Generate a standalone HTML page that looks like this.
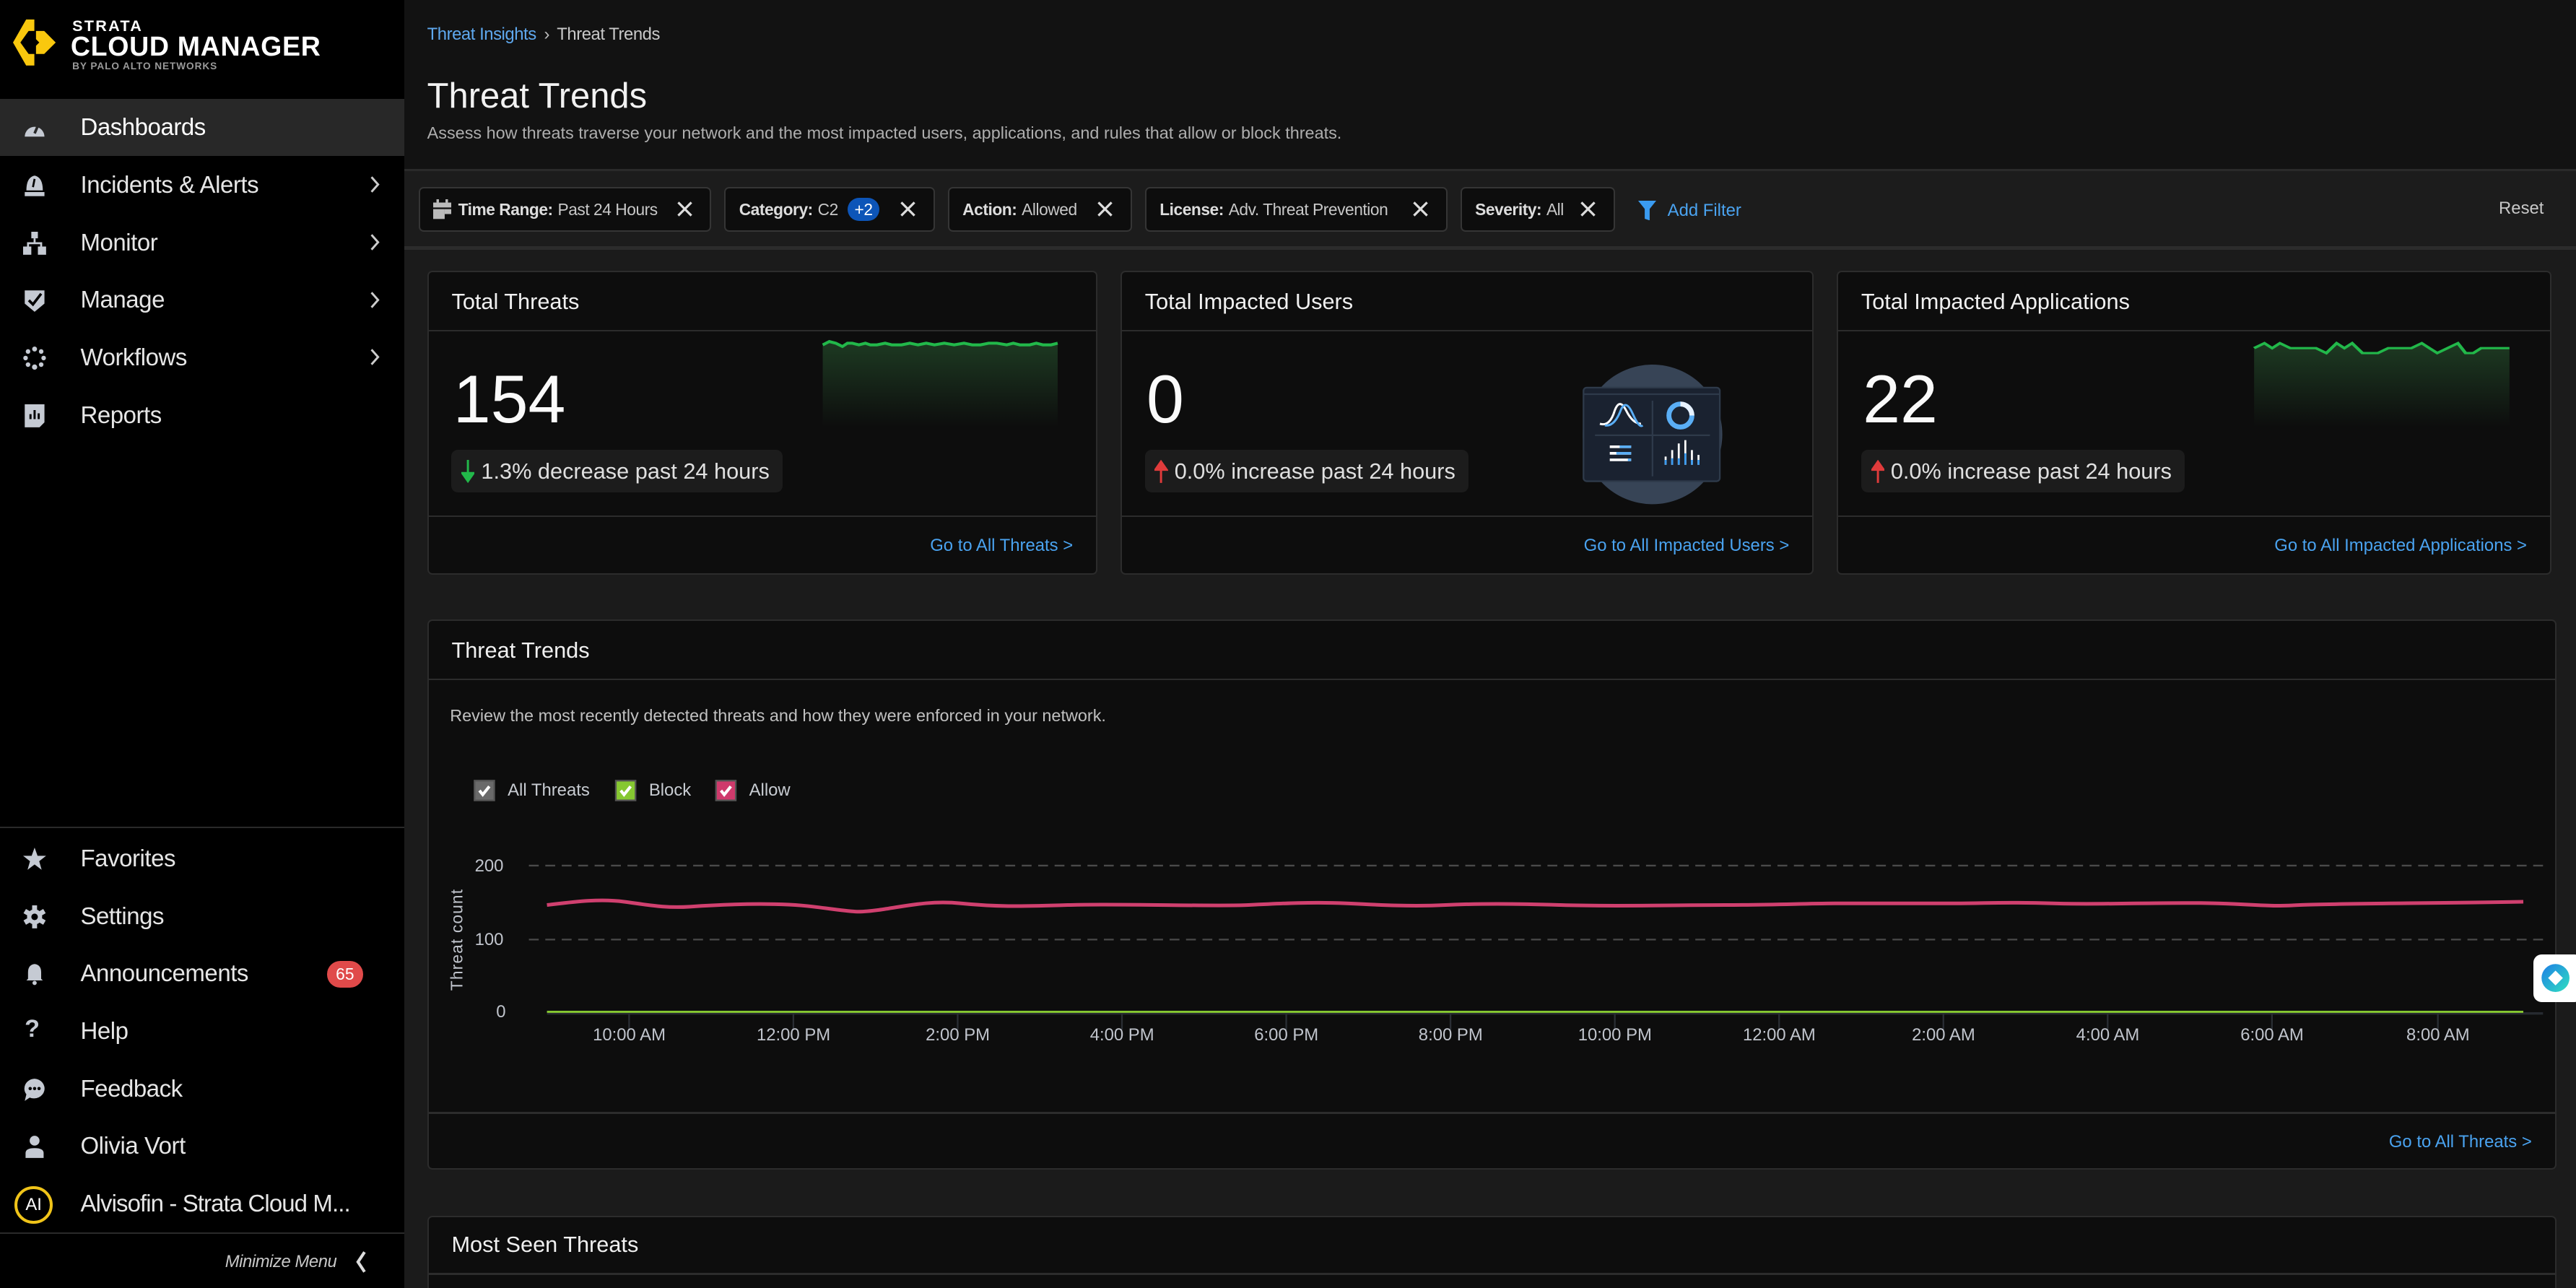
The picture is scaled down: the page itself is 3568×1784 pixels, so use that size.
<!DOCTYPE html>
<html><head><meta charset="utf-8"><style>
*{box-sizing:border-box;margin:0;padding:0}
html,body{width:3568px;height:1784px;overflow:hidden;background:#1b1b1b}
#root{position:relative;width:1568px;height:784px;zoom:2.27551;font-family:"Liberation Sans",sans-serif;color:#e8e8e8;overflow:hidden;background:#1b1b1b}
.a{position:absolute}
.side{left:0;top:0;width:246px;height:784px;background:#000}
.nav{position:absolute;left:0;width:246px;height:35px;display:flex;align-items:center;font-size:14.5px;color:#e6e6e6}
.nav .ic{position:absolute;left:14px;top:11px;width:14px;height:14px}
.nav .t{position:absolute;left:49px;letter-spacing:-0.2px}
.nav .ch{position:absolute;left:224px;top:12px}
.chip{position:absolute;top:114px;height:27px;background:#0d0d0d;border:1px solid #353535;border-radius:3px;font-size:10px;letter-spacing:-0.2px;color:#c8c8c8;display:flex;align-items:center;padding-left:8px;white-space:nowrap}
.chip b{color:#ddd;font-weight:bold;margin-right:3px}
.chip .x{position:absolute;right:10px;top:7px}
.card{position:absolute;background:#0d0d0d;border:1px solid #2c2c2c;border-radius:3px}
.card .h{position:absolute;left:14px;top:10px;font-size:13.5px;color:#f0f0f0}
.hl{position:absolute;left:0;right:0;height:1px;background:#2c2c2c}
.big{position:absolute;left:15px;top:54px;font-size:41px;color:#fafafa;font-weight:300}
.pill{position:absolute;left:14px;top:108px;height:26px;background:#1c1c1c;border-radius:4px;font-size:13.5px;color:#e0e0e0;display:flex;align-items:center;padding:0 8px 0 18px}
.lnk{position:absolute;right:14px;font-size:10.5px;color:#4aa3f0}
.xl{position:absolute;top:624px;font-size:10.5px;color:#c0c4cc;transform:translateX(-50%);white-space:nowrap}
</style></head><body><div id="root">
<!-- sidebar -->
<div class="a side"></div>
<svg class="a" style="left:8px;top:12px" width="27" height="29" viewBox="0 0 27 29"><polygon points="8,0 13,0 13,7 9.5,7 4.5,14 9.5,21 13,21 13,28 8,28 0,14" fill="#f9c80e"/><polygon points="14,7 19,7 26,14 19,21 14,21 14,16 16,14 14,12" fill="#f9c80e"/></svg>
<div class="a" style="left:44px;top:10px;font-size:9.5px;font-weight:bold;letter-spacing:1px;color:#fff">STRATA</div>
<div class="a" style="left:43px;top:19px;font-size:16.5px;font-weight:bold;color:#fff;letter-spacing:0.3px">CLOUD MANAGER</div>
<div class="a" style="left:44px;top:37px;font-size:6px;font-weight:bold;color:#9a9a9a;letter-spacing:0.4px">BY PALO ALTO NETWORKS</div>

<div class="nav" style="top:60px;background:#282828"><svg class="ic" viewBox="0 0 14 14"><path d="M1 12A6 6 0 1 1 13 12Z" fill="#c5cad3"/><path d="M7 10L10 3" stroke="#282828" stroke-width="1.6"/></svg><span class="t" style="color:#fff">Dashboards</span></div>
<div class="nav" style="top:95px"><svg class="ic" viewBox="0 0 14 14"><path d="M2 10Q2 2 7 1Q12 2 12 10Z" fill="#c5cad3"/><rect x="1" y="11" width="12" height="2.5" fill="#c5cad3"/><path d="M6 8L7 3" stroke="#000" stroke-width="1.2"/></svg><span class="t">Incidents &amp; Alerts</span><svg class="ch" width="8" height="11"><path d="M2 1L6 5.5L2 10" stroke="#ccc" fill="none" stroke-width="1.3"/></svg></div>
<div class="nav" style="top:130px"><svg class="ic" viewBox="0 0 14 14"><rect x="5" y="0" width="4" height="4" fill="#c5cad3"/><path d="M7 4V7M3 10V7H11V10" stroke="#c5cad3" fill="none" stroke-width="1.2"/><rect x="0" y="9" width="5" height="5" fill="#c5cad3"/><rect x="9" y="9" width="5" height="5" fill="#c5cad3"/></svg><span class="t">Monitor</span><svg class="ch" width="8" height="11"><path d="M2 1L6 5.5L2 10" stroke="#ccc" fill="none" stroke-width="1.3"/></svg></div>
<div class="nav" style="top:165px"><svg class="ic" viewBox="0 0 14 14"><path d="M1 1H13V9L7 14L1 9Z" fill="#c5cad3"/><path d="M3.5 7L6 9.5L11 3" stroke="#000" fill="none" stroke-width="1.6"/></svg><span class="t">Manage</span><svg class="ch" width="8" height="11"><path d="M2 1L6 5.5L2 10" stroke="#ccc" fill="none" stroke-width="1.3"/></svg></div>
<div class="nav" style="top:200px"><svg class="ic" viewBox="0 0 14 14" fill="#c5cad3"><circle cx="7" cy="1.5" r="1.5"/><circle cx="11" cy="3" r="1.4"/><circle cx="12.5" cy="7" r="1.4"/><circle cx="11" cy="11" r="1.4"/><circle cx="7" cy="12.5" r="1.6"/><circle cx="3" cy="11" r="1.4"/><circle cx="1.5" cy="7" r="1.4"/><circle cx="3" cy="3" r="1.4"/></svg><span class="t">Workflows</span><svg class="ch" width="8" height="11"><path d="M2 1L6 5.5L2 10" stroke="#ccc" fill="none" stroke-width="1.3"/></svg></div>
<div class="nav" style="top:235px"><svg class="ic" viewBox="0 0 14 14"><path d="M1 0H13V11L10 14H1Z" fill="#c5cad3"/><path d="M4.5 9V6M7 9V3.5M9.5 9V5.5" stroke="#000" stroke-width="1.3"/></svg><span class="t">Reports</span></div>

<div class="a" style="left:0;top:503px;width:246px;height:1px;background:#2a2a2a"></div>
<div class="nav" style="top:505px"><svg class="ic" viewBox="0 0 14 14"><polygon points="7,0 8.8,5 14,5 9.8,8.3 11.3,13.5 7,10.3 2.7,13.5 4.2,8.3 0,5 5.2,5" fill="#c5cad3"/></svg><span class="t">Favorites</span></div>
<div class="nav" style="top:540px"><svg class="ic" viewBox="0 0 14 14"><path d="M7 0V14M1 3.5L13 10.5M1 10.5L13 3.5" stroke="#c5cad3" stroke-width="3"/><circle cx="7" cy="7" r="4.6" fill="#c5cad3"/><circle cx="7" cy="7" r="2" fill="#000"/></svg><span class="t">Settings</span></div>
<div class="nav" style="top:575px"><svg class="ic" viewBox="0 0 14 14"><path d="M3 10V6Q3 1.5 7 1Q11 1.5 11 6V10L12 11H2Z" fill="#c5cad3"/><circle cx="7" cy="12.5" r="1.3" fill="#c5cad3"/></svg><span class="t">Announcements</span><span style="position:absolute;left:199px;top:10px;width:22px;height:16px;border-radius:8px;background:#e04a4a;color:#fff;font-size:10px;text-align:center;line-height:16px">65</span></div>
<div class="nav" style="top:610px"><span style="position:absolute;left:15px;top:8px;font-size:15px;color:#c5cad3;font-weight:bold">?</span><span class="t">Help</span></div>
<div class="nav" style="top:645px"><svg class="ic" viewBox="0 0 14 14"><path d="M7 0.5A6.5 6 0 1 1 4 12L1 14L2 10A6.5 6 0 0 1 7 0.5Z" fill="#c5cad3"/><circle cx="4.3" cy="6.5" r="1" fill="#000"/><circle cx="7" cy="6.5" r="1" fill="#000"/><circle cx="9.7" cy="6.5" r="1" fill="#000"/></svg><span class="t">Feedback</span></div>
<div class="nav" style="top:680px"><svg class="ic" viewBox="0 0 14 14" fill="#c5cad3"><circle cx="7" cy="3.5" r="3"/><path d="M1.5 14V11Q1.5 8 7 8Q12.5 8 12.5 11V14Z"/></svg><span class="t">Olivia Vort</span></div>
<div class="nav" style="top:715px"><span style="position:absolute;left:9px;top:7px;width:23px;height:23px;border:2px solid #f0c419;border-radius:50%;font-size:10.5px;color:#fff;text-align:center;line-height:19px">AI</span><span class="t" style="letter-spacing:-0.4px">Alvisofin - Strata Cloud M...</span></div>
<div class="a" style="left:0;top:750px;width:246px;height:1px;background:#2a2a2a"></div>
<div class="a" style="left:137px;top:762px;font-size:10.5px;font-style:italic;color:#c8c8c8;letter-spacing:-0.2px">Minimize Menu</div>
<svg class="a" style="left:215px;top:761px" width="10" height="14"><path d="M7 1L3 7L7 13" stroke="#ddd" fill="none" stroke-width="1.8"/></svg>

<!-- header -->
<div class="a" style="left:246px;top:0;width:1322px;height:104px;background:#121212"></div>
<div class="a" style="left:260px;top:15px;font-size:10.5px;color:#5fa8ee;letter-spacing:-0.2px">Threat Insights <span style="color:#bbb;margin:0 2px">›</span> <span style="color:#c8c8c8">Threat Trends</span></div>
<div class="a" style="left:260px;top:46px;font-size:21.5px;color:#f2f2f2">Threat Trends</div>
<div class="a" style="left:260px;top:75px;font-size:10.3px;color:#aeaeae">Assess how threats traverse your network and the most impacted users, applications, and rules that allow or block threats.</div>
<div class="a" style="left:246px;top:103px;width:1322px;height:1px;background:#2a2a2a"></div>
<div class="a" style="left:246px;top:104px;width:1322px;height:46px;background:#1c1c1c"></div>
<div class="a" style="left:246px;top:150px;width:1322px;height:2px;background:#2c2c2c"></div>

<div class="chip" style="left:255px;width:178px"><svg width="11" height="12" style="margin-right:4px"><rect x="0" y="2" width="11" height="3" fill="#bbb"/><rect x="0" y="6" width="7" height="6" fill="#bbb"/><rect x="7" y="6" width="4" height="3" fill="#bbb"/><rect x="2" y="0" width="1.5" height="2" fill="#bbb"/><rect x="7.5" y="0" width="1.5" height="2" fill="#bbb"/></svg><b>Time Range:</b>Past 24 Hours<svg class="x" width="11" height="11"><path d="M1.5 1.5L9.5 9.5M9.5 1.5L1.5 9.5" stroke="#ddd" stroke-width="1.4"/></svg></div>
<div class="chip" style="left:441px;width:128px"><b>Category:</b>C2<span style="margin-left:6px;background:#0d55b8;color:#fff;border-radius:8px;padding:1px 4px;font-size:10px">+2</span><svg class="x" width="11" height="11"><path d="M1.5 1.5L9.5 9.5M9.5 1.5L1.5 9.5" stroke="#ddd" stroke-width="1.4"/></svg></div>
<div class="chip" style="left:577px;width:112px"><b>Action:</b>Allowed<svg class="x" width="11" height="11"><path d="M1.5 1.5L9.5 9.5M9.5 1.5L1.5 9.5" stroke="#ddd" stroke-width="1.4"/></svg></div>
<div class="chip" style="left:697px;width:184px"><b>License:</b>Adv. Threat Prevention<svg class="x" width="11" height="11"><path d="M1.5 1.5L9.5 9.5M9.5 1.5L1.5 9.5" stroke="#ddd" stroke-width="1.4"/></svg></div>
<div class="chip" style="left:889px;width:94px"><b>Severity:</b>All<svg class="x" width="11" height="11"><path d="M1.5 1.5L9.5 9.5M9.5 1.5L1.5 9.5" stroke="#ddd" stroke-width="1.4"/></svg></div>
<svg class="a" style="left:997px;top:122px" width="11" height="12"><path d="M0 0H11L7 5V12L4 11V5Z" fill="#3a9bf0"/></svg>
<div class="a" style="left:1015px;top:122px;font-size:10.5px;color:#4aa3f0">Add Filter</div>
<div class="a" style="left:1521px;top:121px;font-size:10.5px;color:#c8c8c8">Reset</div>

<!-- cards -->
<div class="card" style="left:260px;top:165px;width:408px;height:185px">
 <div class="h">Total Threats</div><div class="hl" style="top:35px"></div>
 <div class="big">154</div>
 <svg class="a" style="left:238px;top:38px" width="148" height="56"><defs><linearGradient id="g" x1="0" y1="0" x2="0" y2="1"><stop offset="0" stop-color="#1d3a22"/><stop offset="1" stop-color="#0d0d0d"/></linearGradient></defs><path d="M2 6L6 4L10 5L14 7L17 5L20 5L24 6L28 5L31 6L35 6L40 5L44 6L50 6L55 5L60 6L65 5L70 6L76 5L82 6L88 5L93 6L98 6L103 5L108 5L114 6L118 5L122 6L128 6L132 5L136 6L141 6L145 5V56H2Z" fill="url(#g)"/><path d="M2 6L6 4L10 5L14 7L17 5L20 5L24 6L28 5L31 6L35 6L40 5L44 6L50 6L55 5L60 6L65 5L70 6L76 5L82 6L88 5L93 6L98 6L103 5L108 5L114 6L118 5L122 6L128 6L132 5L136 6L141 6L145 5" stroke="#22b84a" stroke-width="1.8" fill="none"/></svg>
 <div class="pill"><svg class="a" style="left:6px;top:6px" width="8" height="14"><path d="M4 0V12M0.5 8L4 13L7.5 8Z" stroke="#22b84a" fill="#22b84a" stroke-width="1.3"/></svg>1.3% decrease past 24 hours</div>
 <div class="hl" style="top:148px"></div>
 <div class="lnk" style="top:160px">Go to All Threats &gt;</div>
</div>
<div class="card" style="left:682px;top:165px;width:422px;height:185px">
 <div class="h">Total Impacted Users</div><div class="hl" style="top:35px"></div>
 <div class="big">0</div>
 <svg class="a" style="left:280px;top:56px" width="86" height="100" viewBox="0 0 86 100"><circle cx="43" cy="42.5" r="42.5" fill="#374456"/><rect x="1" y="14" width="83" height="57" rx="2" fill="#1a2230" stroke="#2e3a4a"/><line x1="1" y1="18" x2="84" y2="18" stroke="#2e3a4a"/><line x1="43" y1="22" x2="43" y2="68" stroke="#2e3a4a"/><line x1="8" y1="43" x2="78" y2="43" stroke="#2e3a4a"/><path d="M11 36Q17 38 20 28Q23 20 27 28T36 36" stroke="#fff" fill="none" stroke-width="1.3"/><path d="M14 37Q20 38 24 27Q27 21 31 30T37 37" stroke="#5aaef5" fill="none" stroke-width="1.3"/><circle cx="60" cy="31" r="7" fill="none" stroke="#5aaef5" stroke-width="3"/><path d="M60 24A7 7 0 0 1 67 31" stroke="#e8f2ff" stroke-width="3" fill="none"/><path d="M17 50H30M17 54H30M17 58H30" stroke="#fff" stroke-width="1.6"/><path d="M23 50H30M21 54H30M28 58H30" stroke="#5aaef5" stroke-width="1.6"/><path d="M51 61V56M55 61V52M59 61V48M63 61V46M67 61V52M71 61V55" stroke="#fff" stroke-width="1.2"/><path d="M51 61V58M55 61V57M59 61V57M63 61V54M67 61V58M71 61V58" stroke="#3a9bf0" stroke-width="1.2"/></svg>
 <div class="pill"><svg class="a" style="left:6px;top:6px" width="8" height="14"><path d="M4 14V2M0.5 6L4 1L7.5 6Z" stroke="#e03b3b" fill="#e03b3b" stroke-width="1.3"/></svg>0.0% increase past 24 hours</div>
 <div class="hl" style="top:148px"></div>
 <div class="lnk" style="top:160px">Go to All Impacted Users &gt;</div>
</div>
<div class="card" style="left:1118px;top:165px;width:435px;height:185px">
 <div class="h">Total Impacted Applications</div><div class="hl" style="top:35px"></div>
 <div class="big">22</div>
 <svg class="a" style="left:250px;top:38px" width="162" height="56"><defs><linearGradient id="g2" x1="0" y1="0" x2="0" y2="1"><stop offset="0" stop-color="#1d3a22"/><stop offset="1" stop-color="#0d0d0d"/></linearGradient></defs><path d="M3 8L7 5L10 8L13 5L17 8H27L31 11L35 5L38 8L41 5L45 11H51L55 8H64L68 5L71 8L74 11L78 8L82 5L85 11H88L91 8H102V56H3Z" fill="url(#g2)" transform="scale(1.57 1) translate(-1 0)"/><path d="M3 8L7 5L10 8L13 5L17 8H27L31 11L35 5L38 8L41 5L45 11H51L55 8H64L68 5L71 8L74 11L78 8L82 5L85 11H88L91 8H102" stroke="#22b84a" stroke-width="1.4" fill="none" transform="scale(1.57 1) translate(-1 0)"/></svg>
 <div class="pill"><svg class="a" style="left:6px;top:6px" width="8" height="14"><path d="M4 14V2M0.5 6L4 1L7.5 6Z" stroke="#e03b3b" fill="#e03b3b" stroke-width="1.3"/></svg>0.0% increase past 24 hours</div>
 <div class="hl" style="top:148px"></div>
 <div class="lnk" style="top:160px">Go to All Impacted Applications &gt;</div>
</div>

<!-- trends -->
<div class="card" style="left:260px;top:377px;width:1296px;height:335px">
 <div class="h" style="top:10px">Threat Trends</div><div class="hl" style="top:35px"></div>
 <div class="a" style="left:13px;top:52px;font-size:10.3px;color:#c0c0c0">Review the most recently detected threats and how they were enforced in your network.</div>
 <div class="hl" style="top:299px"></div>
 <div class="lnk" style="top:311px">Go to All Threats &gt;</div>
</div>
<svg class="a" style="left:288px;top:474px" width="220" height="15"><rect x="1" y="1" width="12" height="12" fill="#6a6a6a" stroke="#555"/><path d="M4 7L6 9.5L10 4.5" stroke="#fff" stroke-width="1.8" fill="none"/><rect x="87" y="1" width="12" height="12" fill="#86c831" stroke="#555"/><path d="M90 7L92 9.5L96 4.5" stroke="#fff" stroke-width="1.8" fill="none"/><rect x="148" y="1" width="12" height="12" fill="#cf3a6c" stroke="#555"/><path d="M151 7L153 9.5L157 4.5" stroke="#fff" stroke-width="1.8" fill="none"/></svg>
<div class="a" style="left:309px;top:475px;font-size:10.5px;color:#c8ccd2">All Threats</div>
<div class="a" style="left:395px;top:475px;font-size:10.5px;color:#c8ccd2">Block</div>
<div class="a" style="left:456px;top:475px;font-size:10.5px;color:#c8ccd2">Allow</div>
<div class="a" style="left:289px;top:521px;font-size:10.5px;color:#c0c4cc">200</div>
<div class="a" style="left:289px;top:566px;font-size:10.5px;color:#c0c4cc">100</div>
<div class="a" style="left:302px;top:610px;font-size:10.5px;color:#c0c4cc">0</div>
<div class="a" style="left:238px;top:566px;font-size:10px;color:#c0c4cc;transform:rotate(-90deg);width:80px;text-align:center;letter-spacing:0.5px;white-space:nowrap">Threat count</div>
<svg class="a" style="left:320px;top:520px" width="1230" height="110"><path d="M2 7H1228M2 52H1228" stroke="#4a4a4a" stroke-dasharray="6 4"/><path d="M13 97H1228" stroke="#262a30" stroke-width="1.5"/><path d="M13 96H1216" stroke="#86c831" stroke-width="1.3"/><g stroke="#2a2e34"><path d="M63 97V107M163 97V107M263 97V107M363 97V107M463 97V107M563 97V107M663 97V107M763 97V107M863 97V107M963 97V107M1063 97V107M1164 97V107"/></g><path d="M13 31C30 29 45 27 60 29S85 33 100 32S150 29 175 32S200 36 215 34S245 28 265 30S300 32 330 31S420 32 440 31S480 29 500 30S540 32 560 31S600 30 630 31S700 31 730 31S780 30 800 30S850 30 870 30S900 29 930 30S1000 29 1030 30S1060 32 1080 31S1160 30 1216 29" stroke="#d0406f" stroke-width="2.2" fill="none"/></svg>
<div class="xl" style="left:383px">10:00 AM</div><div class="xl" style="left:483px">12:00 PM</div><div class="xl" style="left:583px">2:00 PM</div><div class="xl" style="left:683px">4:00 PM</div><div class="xl" style="left:783px">6:00 PM</div><div class="xl" style="left:883px">8:00 PM</div><div class="xl" style="left:983px">10:00 PM</div><div class="xl" style="left:1083px">12:00 AM</div><div class="xl" style="left:1183px">2:00 AM</div><div class="xl" style="left:1283px">4:00 AM</div><div class="xl" style="left:1383px">6:00 AM</div><div class="xl" style="left:1484px">8:00 AM</div>

<div class="card" style="left:260px;top:740px;width:1296px;height:60px">
 <div class="h" style="top:9px">Most Seen Threats</div><div class="hl" style="top:34px"></div>
</div>

<div class="a" style="left:1542px;top:581px;width:30px;height:29px;background:#fff;border-radius:5px"></div>
<svg class="a" style="left:1546px;top:586px" width="19" height="19"><defs><linearGradient id="w" x1="0" y1="0" x2="1" y2="1"><stop offset="0" stop-color="#1e7ee6"/><stop offset="1" stop-color="#2fe0c0"/></linearGradient></defs><circle cx="9.5" cy="9.5" r="8.5" fill="url(#w)"/><path d="M9.5 5L14 9.5L9.5 14L5 9.5Z" fill="#fff"/></svg>
</div></body></html>
